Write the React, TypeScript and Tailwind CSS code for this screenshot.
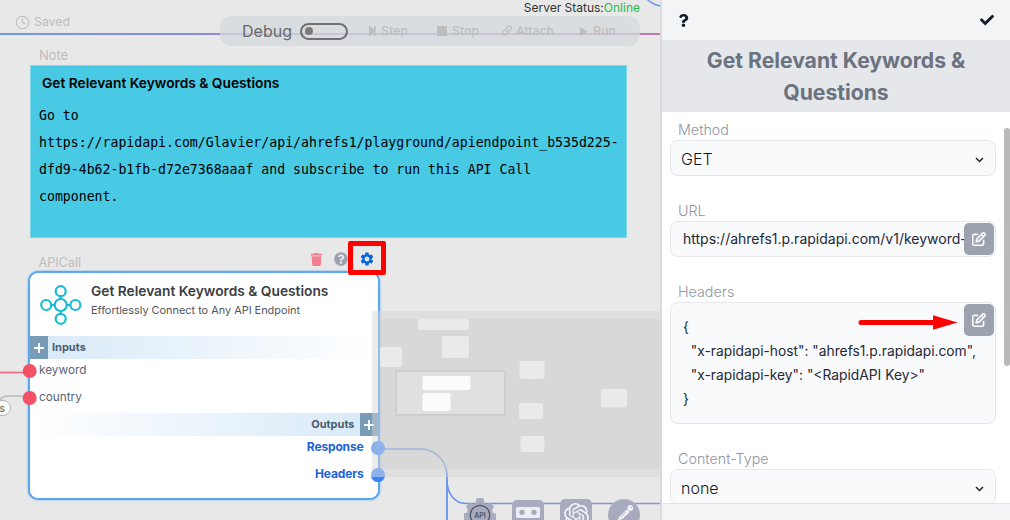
import React from "react";
import { FaCheck, FaQuestion, FaQuestionCircle, FaTrash } from "react-icons/fa";
import { FaRegPenToSquare } from "react-icons/fa6";
import { MdSettings } from "react-icons/md";
import { SiOpenai } from "react-icons/si";
import { BsLink45Deg } from "react-icons/bs";
import { FiClock } from "react-icons/fi";

function Wires() {
  return (
    <svg className="absolute inset-0" width="660" height="520" viewBox="0 0 660 520" fill="none">
      <defs>
        <linearGradient id="top" gradientUnits="userSpaceOnUse" x1="0" y1="0" x2="660" y2="0">
          <stop offset="0" stopColor="#6f97ee" />
          <stop offset="0.35" stopColor="#8f8bd4" />
          <stop offset="1" stopColor="#bf78ad" />
        </linearGradient>
        <linearGradient id="bottom" gradientUnits="userSpaceOnUse" x1="460" y1="0" x2="660" y2="0">
          <stop offset="0" stopColor="#6594ec" />
          <stop offset="1" stopColor="#9c8fcb" />
        </linearGradient>
      </defs>
      <path d="M0 34H660" stroke="url(#top)" strokeWidth="2" />
      <path d="M646 -2Q651 4 660 6" stroke="#6f9df0" strokeWidth="1.5" />
      <path d="M0 372.5H30" stroke="#f0687c" strokeWidth="1.6" />
      <path d="M0 400Q3 396 8 396H20L29 398" stroke="#b9b9b9" strokeWidth="1.5" />
      <path d="M378 449H421C435 449 447 461 447 476V520" stroke="#6594ec" strokeWidth="1.8" />
      <path d="M447 480C447 494 455 503.5 466 503.5H661" stroke="url(#bottom)" strokeWidth="1.6" />
    </svg>
  );
}

function Toolbar() {
  return (
    <div className="absolute left-[220px] top-4 flex h-[30px] w-[420px] items-center rounded-[12px] bg-[#d5dadd]/75 text-[12.3px] font-medium text-[#bdbdbd]">
      <span className="ml-[22px] w-[58px] text-[16px] font-normal text-[#68696b]">Debug</span>
      <span className="flex h-[17px] w-12 items-center rounded-full border-2 border-[#707070] pl-[3px]">
        <span className="size-2 rounded-full bg-[#7b7b7b]" />
      </span>
      <span className="ml-[21px] flex w-[68px] items-center gap-[5px]">
        <svg width="7" height="10" viewBox="0 0 7 10" fill="currentColor"><path d="M0 0h1.500L5 3.800V0h1.700v10H5V6.200L1.500 10H0z" /></svg>
        Step
      </span>
      <span className="flex w-[63px] items-center gap-[5px]">
        <span className="size-[10px] bg-current" />
        Stop
      </span>
      <span className="flex w-[80px] items-center gap-[2px]">
        <BsLink45Deg size={14} strokeWidth={0.4} />
        Attach
      </span>
      <span className="flex items-center gap-[5px]">
        <svg width="8" height="9" viewBox="0 0 8 9" fill="currentColor"><path d="M0 0L8 4.5L0 9z" /></svg>
        Run
      </span>
    </div>
  );
}

function Note() {
  return (
    <section className="absolute left-[30px] top-[65px] h-[173px] w-[597px] border border-[#7fd7e8] bg-[#48c9e4] text-black">
      <h2 className="ml-[11px] mt-[8px] text-[13.75px] font-semibold leading-[18px]">Get Relevant Keywords &amp; Questions</h2>
      <p className="ml-2 mt-[10px] whitespace-pre font-['DejaVu_Sans_Mono',monospace] text-[13.2px] leading-[27px]">
        {"Go to\nhttps://rapidapi.com/Glavier/api/ahrefs1/playground/apiendpoint_b535d225-\ndfd9-4b62-b1fb-d72e7368aaaf and subscribe to run this API Call\ncomponent."}
      </p>
    </section>
  );
}

function HubIcon() {
  return (
    <svg className="mt-px" width="42" height="40" viewBox="0 0 42 40" fill="none" stroke="#17bcd3" strokeWidth="2.2">
      <circle cx="20.7" cy="20" r="6" />
      <circle cx="20.7" cy="6.2" r="5" />
      <circle cx="20.7" cy="33.8" r="5" />
      <circle cx="6.2" cy="20" r="5" />
      <circle cx="35.4" cy="20" r="5" />
      <path d="M20.7 11v3M20.7 26v3M11 20h4M26.7 20h4" />
    </svg>
  );
}

function Plus() {
  return (
    <span className="flex h-[23px] w-[18px] shrink-0 items-center justify-center bg-[#789bb7]">
      <svg width="10" height="10" viewBox="0 0 10 10" stroke="#fff" strokeWidth="1.8"><path d="M5 0v10M0 5h10" /></svg>
    </span>
  );
}

function ApiNode() {
  return (
    <article className="absolute left-[28px] top-[271px] flex h-[229px] w-[351.5px] flex-col rounded-[10px] border-2 border-[#5ba8f0] bg-white shadow-[0_0_2px_#5ba8f0]">
      <header className="flex h-[63px] pl-[10px] pt-[11px]">
        <HubIcon />
        <div className="ml-[9px] -mt-[3px]">
          <h3 className="text-[13.75px] font-semibold leading-5 text-[#3b3d42]">Get Relevant Keywords &amp; Questions</h3>
          <p className="text-[10.9px] leading-[18px] text-[#54565c]">Effortlessly Connect to Any API Endpoint</p>
        </div>
      </header>
      <div className="flex h-[23px] items-center bg-linear-to-r from-[#d7e9f7] to-white text-[11px] font-bold text-[#4d5d70]">
        <Plus />
        <span className="ml-1">Inputs</span>
      </div>
      <div className="ml-[9px] mt-[-2px] flex h-[56px] flex-col text-[11.8px] leading-[27px] text-[#5b6577]">
        <span>keyword</span>
        <span>country</span>
      </div>
      <div className="flex h-[23px] items-center justify-end bg-linear-to-l from-[#d7e9f7] to-white text-[11px] font-bold text-[#4d5d70]">
        <span className="mr-[5px]">Outputs</span>
        <Plus />
      </div>
      <div className="mr-[14px] mt-[-3px] flex flex-col items-end text-[12px] font-bold leading-[27px] tracking-[-0.15px] text-[#1b62d8]">
        <span>Response</span>
        <span>Headers</span>
      </div>
    </article>
  );
}

function MiniMap() {
  return (
    <svg className="absolute left-[372px] top-[311px]" width="288" height="166" viewBox="372 311 288 166">
      <path d="M372 311H660V477H372z" fill="#d6d6d6" fillOpacity="0.48" />
      <path d="M380 319H660V469H380z" fill="#cecece" fillOpacity="0.4" />
      <g fill="#eaeaea">
        <rect x="418" y="319" width="51" height="11" rx="2" />
        <rect x="442" y="336" width="27" height="22" rx="2" />
        <rect x="380" y="347" width="22" height="20" rx="2" />
        <rect x="519.5" y="361" width="25" height="18" rx="2" />
        <rect x="519" y="403" width="24" height="16" rx="2" />
        <rect x="520.5" y="436" width="24" height="16" rx="2" />
        <rect x="601" y="389" width="26" height="18.5" rx="2" />
      </g>
      <rect x="396" y="371" width="109" height="44" fill="#e0e0e0" stroke="#cecece" strokeWidth="2" />
      <rect x="422.5" y="376" width="48" height="14" rx="2" fill="#fbfbfb" />
      <rect x="422.5" y="393" width="28" height="18" rx="2" fill="#fbfbfb" />
    </svg>
  );
}

function Ports() {
  return (
    <svg className="absolute inset-0" width="660" height="520" viewBox="0 0 660 520">
      <circle cx="29.7" cy="371" r="7" fill="#f45165" />
      <circle cx="29.7" cy="398" r="7" fill="#f45165" />
      <circle cx="378" cy="448" r="7" fill="#8cb1eb" />
      <circle cx="378" cy="475" r="7" fill="#8cb1eb" />
      <path d="M371.3 477a7 7 0 0 0 13.4 0z" fill="#3c86f4" />
    </svg>
  );
}

function Dock() {
  return (
    <div className="absolute left-[464px] top-[498px] flex h-[22px] gap-4 overflow-hidden text-[#a8abbd]">
      <svg className="shrink-0" width="32" height="34" viewBox="0 0 32 34">
        <path
          fill="currentColor"
          d="M12 3a4 4 0 0 1 8 0v2l3 1.5 3-2 4 4-2 4 1.5 3h2.500v8h-2.500L28 27l-5 5H9l-5-5 1.500-4H0v-8h2.500L4 12 2 8.500l4-4 3 2L12 5z"
        />
        <circle cx="16" cy="17" r="9.700" fill="none" stroke="#4f5670" strokeWidth="1.300" />
        <text x="16" y="19.600" textAnchor="middle" fontFamily="Inter, sans-serif" fontSize="7" fontWeight="600" fill="#4f5670">API</text>
      </svg>
      <svg className="mt-[2px] shrink-0" width="32" height="32" viewBox="0 0 32 32">
        <rect width="32" height="32" rx="5" fill="currentColor" />
        <rect x="4" y="7" width="24" height="11" rx="1.500" fill="#ececf2" />
        <circle cx="10" cy="12.300" r="2.600" fill="currentColor" />
        <circle cx="22" cy="12.300" r="2.600" fill="currentColor" />
      </svg>
      <span className="mt-px flex size-8 shrink-0 items-center justify-center rounded-[5px] bg-[#a8abbd] text-[#f4f4f7]">
        <SiOpenai size={25} />
      </span>
      <svg className="mt-px shrink-0" width="32" height="32" viewBox="0 0 32 32">
        <circle cx="16" cy="16" r="16" fill="currentColor" />
        <path d="M9 22l3-5 6.500-6.200 2.700 2.700-6.500 6.200z" fill="#f2f2f6" />
        <path d="M13 18l5-5" stroke="#a8abbd" strokeWidth="0.700" />
        <circle cx="22.300" cy="9" r="2.900" fill="#f2f2f6" />
        <path d="M19 11.200l2 2" stroke="#f2f2f6" strokeWidth="1.500" />
        <path d="M22.500 8.200l1.500 0.300" stroke="#a8abbd" strokeWidth="0.900" />
      </svg>
    </div>
  );
}

function Canvas() {
  return (
    <main className="relative h-[520px] w-[660px] shrink-0 overflow-hidden bg-[#e8e8e8]">
      <Wires />
      <div className="absolute left-[15px] top-[13px] flex items-center gap-1 text-[12.300px] leading-[18px] text-[#bdbdbd]">
        <FiClock size={15} strokeWidth={1.7} />
        Saved
      </div>
      <div className="absolute right-5 top-0 text-[12px] leading-4 text-[#333]">
        Server Status:<span className="text-[#27bd50]">Online</span>
      </div>
      <Toolbar />
      <span className="absolute left-[39px] top-[47px] text-[12.900px] leading-[18px] text-[#bdbdbd]">Note</span>
      <Note />
      <span className="absolute left-[38.500px] top-[254px] text-[12.600px] leading-[18px] text-[#bdbdbd]">APICall</span>
      <ApiNode />
      <MiniMap />
      <Ports />
      <span className="absolute left-[-14px] top-[400px] flex h-[16px] w-[25px] items-center justify-end rounded-full border border-[#b5b5b5] bg-white pr-[5px] text-[10px] font-medium text-[#666]">s</span>
      <div className="absolute left-[310px] top-[252px] flex h-[14px] items-center">
        <FaTrash size={13} color="#f0808d" />
        <FaQuestionCircle size={14} color="#9ca1b0" className="ml-[11px]" />
      </div>
      <div className="absolute left-[348px] top-[241px] flex h-[34px] w-[38px] items-center justify-center rounded-[2px] border-[5px] border-[#ff0000]">
        <MdSettings size={16} color="#0667dc" className="mt-px mr-px shrink-0" />
      </div>
      <Dock />
    </main>
  );
}

function Label({ children }: { children: React.ReactNode }) {
  return <div className="ml-2 h-[18px] text-[14.300px] font-light leading-[18px] text-[#8f96a5]">{children}</div>;
}

function Select({ value }: { value: string }) {
  return (
    <div className="mt-px flex h-9 items-center justify-between rounded-lg border border-[#e5e7eb] bg-[#f9fafb] pl-[10px] pr-[11px] text-[16px] font-light text-[#111827]">
      <span className="pt-[2px]">{value}</span>
      <svg className="mt-[3px]" width="9" height="6" viewBox="0 0 9 6" fill="none" stroke="#222" strokeWidth="1.500"><path d="M1 1l3.500 3.500L8 1" /></svg>
    </div>
  );
}

function EditButton() {
  return (
    <button className="absolute right-px top-px flex h-8 w-[30px] items-center justify-center rounded-[5px] bg-[#9ca3af] text-white">
      <FaRegPenToSquare size={14} stroke="currentColor" strokeWidth={14} />
    </button>
  );
}

function Panel() {
  return (
    <aside className="flex h-[520px] w-[350px] shrink-0 flex-col border-l-2 border-[#d8dae0] bg-white">
      <header className="flex h-10 shrink-0 items-center justify-between bg-[#f3f4f6] pl-[15px] pr-4 text-[#111827]">
        <FaQuestion size={13} />
        <FaCheck size={14} />
      </header>
      <h1 className="h-[72px] shrink-0 bg-[#e5e7eb] px-8 pt-1 text-center text-[21.2px] font-bold leading-8 tracking-[-0.03px] text-[#6b7280]">
        Get Relevant Keywords &amp; Questions
      </h1>
      <div className="flex h-[391px] shrink-0 overflow-hidden">
        <div className="ml-2 w-[326px] pt-[9px]">
          <Label>Method</Label>
          <Select value="GET" />
          <div className="h-[26px]" />
          <Label>URL</Label>
          <div className="relative mt-px h-9 overflow-hidden rounded-lg border border-[#e5e7eb] bg-[#f9fafb] pl-3 text-[14px] leading-[34px] text-[#1f2937]">
            <span className="whitespace-nowrap">https://ahrefs1.p.rapidapi.com/v1/keyword-</span>
            <EditButton />
          </div>
          <div className="h-[26px]" />
          <Label>Headers</Label>
          <div className="relative mt-px h-[122px] rounded-lg border border-[#e5e7eb] bg-[#f9fafb] pl-3 pt-[12px] text-[13.800px] leading-6 text-[#1f2937]">
            <div className="whitespace-pre">{'{\n  "x-rapidapi-host": "ahrefs1.p.rapidapi.com",\n  "x-rapidapi-key": "<RapidAPI Key>"\n}'}</div>
            <EditButton />
            <svg className="absolute left-[187px] top-[11px]" width="101" height="17" viewBox="0 0 101 17">
              <path d="M3 8.500H78" stroke="#ff0000" strokeWidth="5" strokeLinecap="round" />
              <path d="M75 1.200L99.500 8.500L75 15.800z" fill="#ff0000" />
            </svg>
          </div>
          <div className="h-[26px]" />
          <Label>Content-Type</Label>
          <Select value="none" />
        </div>
        <div className="ml-auto mt-4 h-[238px] w-[6px] rounded-t-[3px] rounded-b-[3px] bg-[#bababa]" />
      </div>
      <footer className="h-[17px] shrink-0 border-t border-[#e1e3e8] bg-[#f3f4f6]" />
    </aside>
  );
}

export default function App() {
  return (
    <div className="flex h-[520px] w-[1010px] overflow-hidden font-['Inter',sans-serif]">
      <Canvas />
      <Panel />
    </div>
  );
}
